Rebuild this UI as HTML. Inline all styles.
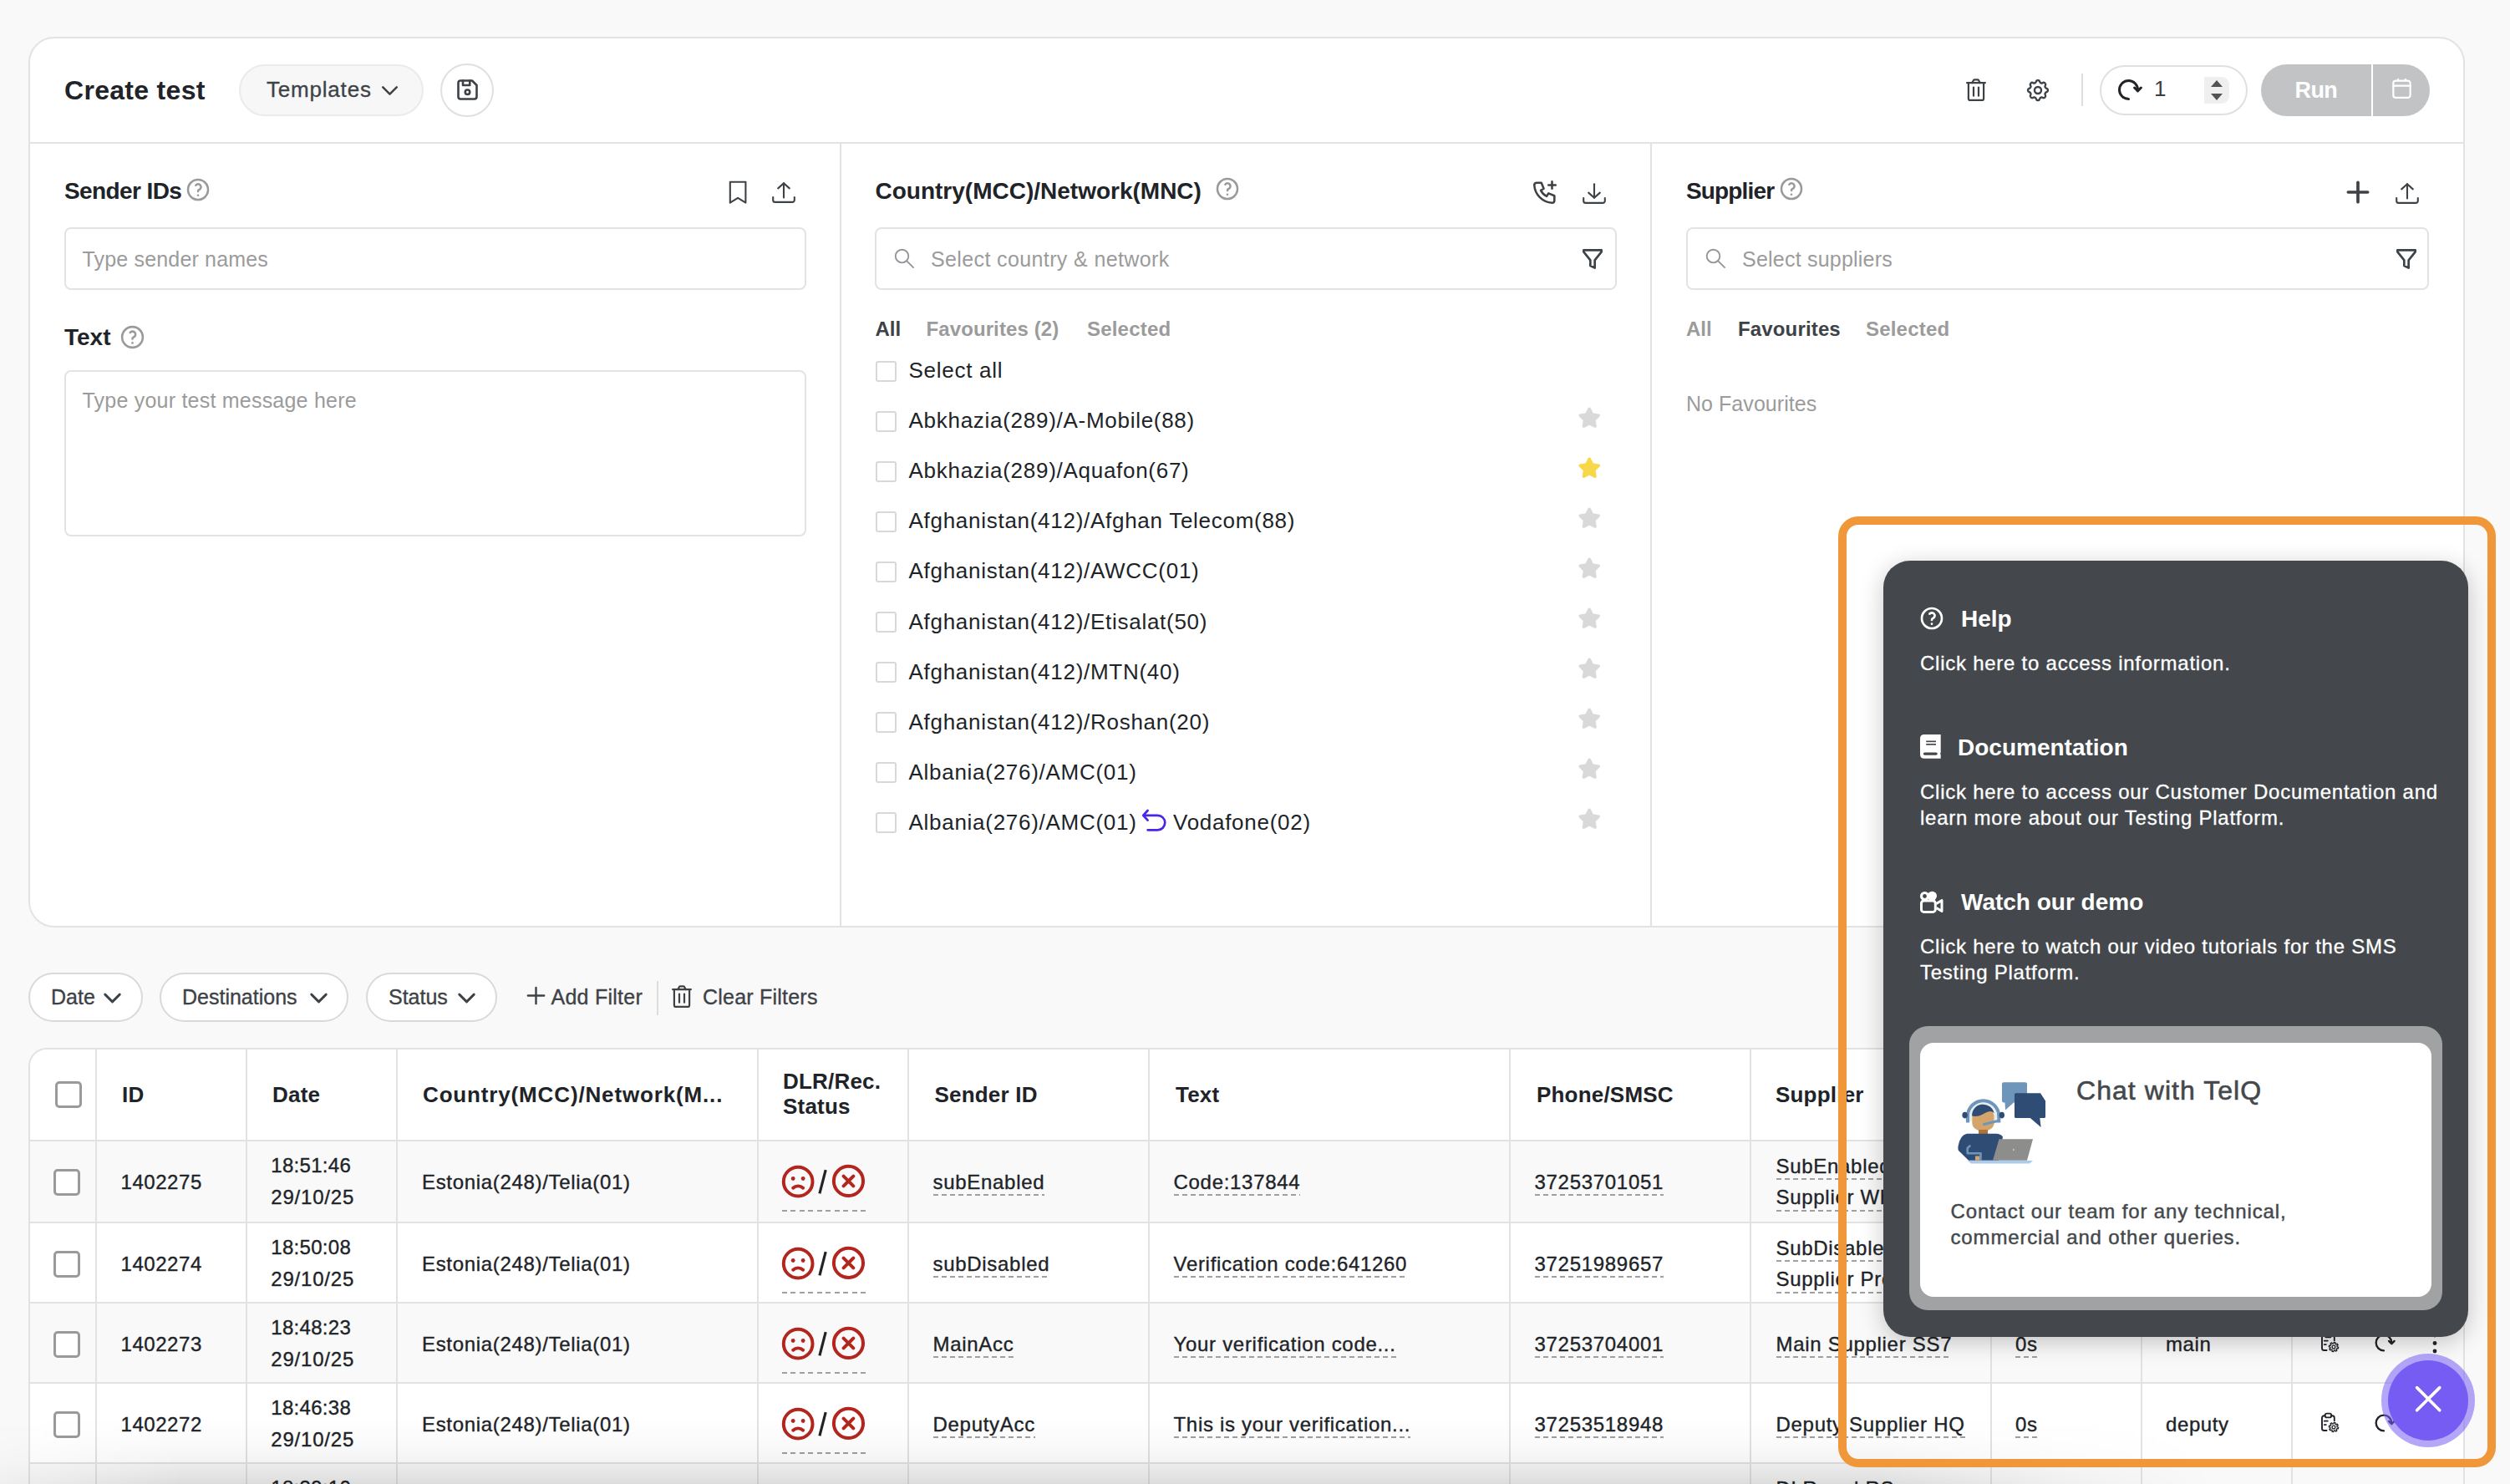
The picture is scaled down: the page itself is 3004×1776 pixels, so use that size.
<!DOCTYPE html><html><head><meta charset="utf-8"><style>
html,body{margin:0;padding:0;width:3004px;height:1776px;overflow:hidden;background:#f9f9f9;font-family:"Liberation Sans",sans-serif;}
.a{position:absolute;box-sizing:border-box;}
.t{position:absolute;white-space:nowrap;line-height:1.15;}
.u::after{content:'';position:absolute;left:0;right:0;bottom:-2.7px;height:2px;background:repeating-linear-gradient(90deg,#a0a0a0 0 6px,transparent 6px 10px);}
</style></head><body>
<div class="a" style="left:34px;top:44px;width:2916px;height:1066px;background:#fff;border:2px solid #e3e3e3;border-radius:31px;"></div>
<div class="a" style="left:36px;top:170px;width:2912px;height:2px;background:#e3e3e3;"></div>
<div class="a" style="left:1005px;top:172px;width:2px;height:936px;background:#e3e3e3;"></div>
<div class="a" style="left:1975px;top:172px;width:2px;height:936px;background:#e3e3e3;"></div>
<div class="t" style="left:77px;top:89.5px;font-size:32px;font-weight:700;color:#202327;letter-spacing:0.3px;">Create test</div>
<div class="a" style="left:286px;top:77px;width:221px;height:62px;background:#f7f7f7;border:2px solid #ebebeb;border-radius:31px;"></div>
<div class="t" style="left:319px;top:92.5px;font-size:26px;font-weight:400;color:#3d4247;-webkit-text-stroke:0.3px #3d4247;letter-spacing:0.8px;">Templates</div>
<svg class="a" style="left:449.8px;top:91.7px;width:33.0px;height:33.0px;color:#3d4247;" viewBox="0 0 24 24" fill="none" stroke="#3d4247" stroke-width="1.85" stroke-linecap="round" stroke-linejoin="round"><path d="M6 9l6 6l6 -6"/></svg>
<div class="a" style="left:527px;top:76px;width:64px;height:64px;border:2px solid #e0e0e0;border-radius:50%;"></div>
<svg class="a" style="left:543px;top:91px;width:33px;height:33px;color:#3d4247;" viewBox="0 0 24 24" fill="none" stroke="#3d4247" stroke-width="1.9" stroke-linecap="round" stroke-linejoin="round"><path d="M6 4h10l4 4v10a2 2 0 0 1 -2 2h-12a2 2 0 0 1 -2 -2v-12a2 2 0 0 1 2 -2"/><path d="M10 14a2 2 0 1 0 4 0a2 2 0 1 0 -4 0"/><path d="M14 4l0 4l-6 0l0 -4"/></svg>
<svg class="a" style="left:2350px;top:90px;width:30px;height:35px;color:#3d4247;" viewBox="0 0 30 35" fill="none" stroke="#3d4247" stroke-width="2.2" stroke-linecap="round" stroke-linejoin="round"><path d="M4.1 9.1H25.9"/><path d="M5.9 9.1V27.9a2 2 0 0 0 2 2H22.1a2 2 0 0 0 2 -2V9.1"/><path d="M12 14.5V24.7"/><path d="M18 14.5V24.7"/><path d="M10.2 9.1L11.9 6.2Q12.4 5.4 13.3 5.4H16.7Q17.6 5.4 18.1 6.2L19.8 9.1"/></svg>
<svg class="a" style="left:2422px;top:92px;width:34px;height:32px;color:#3d4247;" viewBox="0 0 24 24" fill="none" stroke="#3d4247" stroke-width="1.8" stroke-linecap="round" stroke-linejoin="round"><path d="M10.325 4.317c.426 -1.756 2.924 -1.756 3.35 0a1.724 1.724 0 0 0 2.573 1.066c1.543 -.94 3.31 .826 2.37 2.37a1.724 1.724 0 0 0 1.065 2.572c1.756 .426 1.756 2.924 0 3.35a1.724 1.724 0 0 0 -1.066 2.573c.94 1.543 -.826 3.31 -2.37 2.37a1.724 1.724 0 0 0 -2.572 1.065c-.426 1.756 -2.924 1.756 -3.35 0a1.724 1.724 0 0 0 -2.573 -1.066c-1.543 .94 -3.31 -.826 -2.37 -2.37a1.724 1.724 0 0 0 -1.065 -2.572c-1.756 -.426 -1.756 -2.924 0 -3.35a1.724 1.724 0 0 0 1.066 -2.573c-.94 -1.543 .826 -3.31 2.37 -2.37c1 .608 2.296 .07 2.572 -1.065z"/><path d="M9 12a3 3 0 1 0 6 0a3 3 0 0 0 -6 0"/></svg>
<div class="a" style="left:2491px;top:88px;width:2px;height:39px;background:#dddddd;"></div>
<div class="a" style="left:2513px;top:78px;width:177px;height:60px;border:2px solid #e0e0e0;border-radius:30px;"></div>
<svg class="a" style="left:2531px;top:91px;width:33px;height:33px;color:#202327;" viewBox="0 0 24 24" fill="none" stroke="#202327" stroke-width="2.2" stroke-linecap="round" stroke-linejoin="round"><path d="M12 20A8 8 0 1 1 20 12"/><path d="M17.2 10.2L20 13L22.8 10.2"/></svg>
<div class="t" style="left:2578px;top:92.0px;font-size:26px;font-weight:400;color:#3a3f44;">1</div>
<div class="a" style="left:2638px;top:92px;width:30px;height:32px;background:#efefef;border-radius:0 9px 9px 0;"></div>
<svg class="a" style="left:2646px;top:96px;width:14px;height:24px" viewBox="0 0 14 24"><path d="M7 0L14 8H0z M0 16H14L7 24z" fill="#505356"/></svg>
<div class="a" style="left:2706px;top:77px;width:132px;height:62px;background:#c2c3c5;border-radius:31px 0 0 31px;"></div>
<div class="a" style="left:2840px;top:77px;width:68px;height:62px;background:#c2c3c5;border-radius:0 31px 31px 0;"></div>
<div class="t" style="left:2746.5px;top:92.6px;font-size:27px;font-weight:700;color:#ffffff;letter-spacing:-0.6px;">Run</div>
<svg class="a" style="left:2860px;top:91px;width:29px;height:29px;color:#ffffff;" viewBox="0 0 24 24" fill="none" stroke="#ffffff" stroke-width="1.8" stroke-linecap="round" stroke-linejoin="round"><path d="M3.6 7a2.4 2.4 0 0 1 2.4 -2.4h12a2.4 2.4 0 0 1 2.4 2.4v12a2.4 2.4 0 0 1 -2.4 2.4h-12a2.4 2.4 0 0 1 -2.4 -2.4v-12z"/><path d="M15.6 3.2v1.4"/><path d="M8.4 3.2v1.4"/><path d="M3.6 9.6h16.8"/></svg>
<div class="t" style="left:77px;top:212.7px;font-size:28px;font-weight:700;color:#202327;letter-spacing:-0.6px;">Sender IDs</div>
<svg class="a" style="left:221px;top:211px;width:32px;height:32px;color:#9a9a9a;" viewBox="0 0 24 24" fill="none" stroke="#9a9a9a" stroke-width="1.9" stroke-linecap="round" stroke-linejoin="round"><path d="M3 12a9 9 0 1 0 18 0a9 9 0 1 0 -18 0"/><path d="M12 17l0 .01"/><path d="M12 13.5a1.5 1.5 0 0 1 1 -1.5a2.6 2.6 0 1 0 -3 -4"/></svg>
<svg class="a" style="left:860px;top:205px;width:110px;height:50px" viewBox="0 0 110 50" fill="none" stroke="#3d4247" stroke-width="2.1" stroke-linecap="round" stroke-linejoin="round"><path d="M13.8 12.7H32.4V37.6L23.1 31.9L13.8 37.6Z"/></svg>
<svg class="a" style="left:860px;top:205px;width:110px;height:50px" viewBox="0 0 110 50" fill="none" stroke="#3d4247" stroke-width="2.1" stroke-linecap="round" stroke-linejoin="round"><path d="M78 14.4V31.5"/><path d="M71.2 20.4L78 14.2L84.8 20.4"/><path d="M65.2 31V34.4a2.5 2.5 0 0 0 2.5 2.5H88.3a2.5 2.5 0 0 0 2.5 -2.5V31"/></svg>
<div class="a" style="left:77px;top:272px;width:888px;height:75px;border:2px solid #e1e3e6;border-radius:8px;"></div>
<div class="t" style="left:98.5px;top:296.0px;font-size:25px;font-weight:400;color:#9b9b9b;letter-spacing:0.17px;">Type sender names</div>
<div class="t" style="left:77px;top:388.4px;font-size:28px;font-weight:700;color:#202327;">Text</div>
<svg class="a" style="left:142px;top:387px;width:33px;height:33px;color:#9a9a9a;" viewBox="0 0 24 24" fill="none" stroke="#9a9a9a" stroke-width="1.9" stroke-linecap="round" stroke-linejoin="round"><path d="M3 12a9 9 0 1 0 18 0a9 9 0 1 0 -18 0"/><path d="M12 17l0 .01"/><path d="M12 13.5a1.5 1.5 0 0 1 1 -1.5a2.6 2.6 0 1 0 -3 -4"/></svg>
<div class="a" style="left:77px;top:443px;width:888px;height:199px;border:2px solid #e1e3e6;border-radius:8px;"></div>
<div class="t" style="left:98.5px;top:465.4px;font-size:25px;font-weight:400;color:#9b9b9b;letter-spacing:0.22px;">Type your test message here</div>
<div class="t" style="left:1047.5px;top:212.7px;font-size:28px;font-weight:700;color:#202327;">Country(MCC)/Network(MNC)</div>
<svg class="a" style="left:1453px;top:210px;width:32px;height:32px;color:#9a9a9a;" viewBox="0 0 24 24" fill="none" stroke="#9a9a9a" stroke-width="1.9" stroke-linecap="round" stroke-linejoin="round"><path d="M3 12a9 9 0 1 0 18 0a9 9 0 1 0 -18 0"/><path d="M12 17l0 .01"/><path d="M12 13.5a1.5 1.5 0 0 1 1 -1.5a2.6 2.6 0 1 0 -3 -4"/></svg>
<svg class="a" style="left:1832px;top:212px;width:34px;height:36px;color:#3d4247;" viewBox="0 0 24 24" fill="none" stroke="#3d4247" stroke-width="1.8" stroke-linecap="round" stroke-linejoin="round"><path d="M5 4h4l2 5l-2.5 1.5a11 11 0 0 0 5 5l1.5 -2.5l5 2v4a2 2 0 0 1 -2 2a16 16 0 0 1 -15 -15a2 2 0 0 1 2 -2"/><path d="M15 6h6m-3 -3v6"/></svg>
<svg class="a" style="left:1829.8px;top:205.5px;width:110px;height:50px" viewBox="0 0 110 50" fill="none" stroke="#3d4247" stroke-width="2.1" stroke-linecap="round" stroke-linejoin="round"><path d="M78 14.2V30.5"/><path d="M71.2 24.6L78 30.8L84.8 24.6"/><path d="M65.2 31V34.4a2.5 2.5 0 0 0 2.5 2.5H88.3a2.5 2.5 0 0 0 2.5 -2.5V31"/></svg>
<div class="a" style="left:1047px;top:272px;width:888px;height:75px;border:2px solid #e1e3e6;border-radius:8px;"></div>
<svg class="a" style="left:1055px;top:285px;width:50px;height:50px" viewBox="0 0 50 50" fill="none" stroke="#939598" stroke-width="1.85" stroke-linecap="round"><circle cx="24.5" cy="21.5" r="7.8"/><path d="M30.2 27.3L38.1 35.1"/></svg>
<div class="t" style="left:1114px;top:296.0px;font-size:25px;font-weight:400;color:#9b9b9b;letter-spacing:0.38px;">Select country &amp; network</div>
<svg class="a" style="left:1889px;top:294px;width:34px;height:32px;color:#3d4247;" viewBox="0 0 24 24" fill="none" stroke="#3d4247" stroke-width="2" stroke-linecap="round" stroke-linejoin="round"><path d="M4 4h16v1.5l-6 7.5v7l-4 -2v-5l-6 -7.5z"/></svg>
<div class="t" style="left:1047.5px;top:379.9px;font-size:24px;font-weight:700;color:#3d4247;">All</div>
<div class="t" style="left:1108.5px;top:379.9px;font-size:24px;font-weight:700;color:#9b9b9b;letter-spacing:0.1px;">Favourites (2)</div>
<div class="t" style="left:1301px;top:379.9px;font-size:24px;font-weight:700;color:#9b9b9b;letter-spacing:0.2px;">Selected</div>
<div class="a" style="left:1047.5px;top:431.5px;width:25.0px;height:25.0px;border:2px solid #d8d8d8;border-radius:3px;"></div>
<div class="t" style="left:1087.5px;top:429.2px;font-size:26px;font-weight:400;color:#202327;letter-spacing:0.72px;">Select all</div>
<div class="a" style="left:1047.5px;top:491.55px;width:25.0px;height:24.999999999999943px;border:2px solid #d8d8d8;border-radius:3px;"></div>
<div class="t" style="left:1087.5px;top:489.3px;font-size:26px;font-weight:400;color:#202327;letter-spacing:0.72px;">Abkhazia(289)/A-Mobile(88)</div>
<svg class="a" style="left:1889.3px;top:486.85px;width:26.4px;height:26.4px" viewBox="0 0 24 24"><path d="M8.243 7.34l-6.38 .925l-.113 .023a1 1 0 0 0 -.44 1.684l4.622 4.499l-1.09 6.355l-.013 .11a1 1 0 0 0 1.464 .944l5.706 -3l5.693 3l.1 .046a1 1 0 0 0 1.352 -1.1l-1.091 -6.355l4.624 -4.5l.078 -.085a1 1 0 0 0 -.633 -1.62l-6.38 -.926l-2.852 -5.78a1 1 0 0 0 -1.794 0l-2.853 5.78z" fill="#d9d9d9" stroke="#d9d9d9" stroke-width="1.3" stroke-linejoin="round"/></svg>
<div class="a" style="left:1047.5px;top:551.6px;width:25.0px;height:25.0px;border:2px solid #d8d8d8;border-radius:3px;"></div>
<div class="t" style="left:1087.5px;top:549.3px;font-size:26px;font-weight:400;color:#202327;letter-spacing:0.72px;">Abkhazia(289)/Aquafon(67)</div>
<svg class="a" style="left:1889.3px;top:546.90px;width:26.4px;height:26.4px" viewBox="0 0 24 24"><path d="M8.243 7.34l-6.38 .925l-.113 .023a1 1 0 0 0 -.44 1.684l4.622 4.499l-1.09 6.355l-.013 .11a1 1 0 0 0 1.464 .944l5.706 -3l5.693 3l.1 .046a1 1 0 0 0 1.352 -1.1l-1.091 -6.355l4.624 -4.5l.078 -.085a1 1 0 0 0 -.633 -1.62l-6.38 -.926l-2.852 -5.78a1 1 0 0 0 -1.794 0l-2.853 5.78z" fill="#f7d84a" stroke="#f7d84a" stroke-width="1.3" stroke-linejoin="round"/></svg>
<div class="a" style="left:1047.5px;top:611.65px;width:25.0px;height:25.0px;border:2px solid #d8d8d8;border-radius:3px;"></div>
<div class="t" style="left:1087.5px;top:609.4px;font-size:26px;font-weight:400;color:#202327;letter-spacing:0.72px;">Afghanistan(412)/Afghan Telecom(88)</div>
<svg class="a" style="left:1889.3px;top:606.95px;width:26.4px;height:26.4px" viewBox="0 0 24 24"><path d="M8.243 7.34l-6.38 .925l-.113 .023a1 1 0 0 0 -.44 1.684l4.622 4.499l-1.09 6.355l-.013 .11a1 1 0 0 0 1.464 .944l5.706 -3l5.693 3l.1 .046a1 1 0 0 0 1.352 -1.1l-1.091 -6.355l4.624 -4.5l.078 -.085a1 1 0 0 0 -.633 -1.62l-6.38 -.926l-2.852 -5.78a1 1 0 0 0 -1.794 0l-2.853 5.78z" fill="#d9d9d9" stroke="#d9d9d9" stroke-width="1.3" stroke-linejoin="round"/></svg>
<div class="a" style="left:1047.5px;top:671.7px;width:25.0px;height:25.0px;border:2px solid #d8d8d8;border-radius:3px;"></div>
<div class="t" style="left:1087.5px;top:669.4px;font-size:26px;font-weight:400;color:#202327;letter-spacing:0.72px;">Afghanistan(412)/AWCC(01)</div>
<svg class="a" style="left:1889.3px;top:667.00px;width:26.4px;height:26.4px" viewBox="0 0 24 24"><path d="M8.243 7.34l-6.38 .925l-.113 .023a1 1 0 0 0 -.44 1.684l4.622 4.499l-1.09 6.355l-.013 .11a1 1 0 0 0 1.464 .944l5.706 -3l5.693 3l.1 .046a1 1 0 0 0 1.352 -1.1l-1.091 -6.355l4.624 -4.5l.078 -.085a1 1 0 0 0 -.633 -1.62l-6.38 -.926l-2.852 -5.78a1 1 0 0 0 -1.794 0l-2.853 5.78z" fill="#d9d9d9" stroke="#d9d9d9" stroke-width="1.3" stroke-linejoin="round"/></svg>
<div class="a" style="left:1047.5px;top:731.75px;width:25.0px;height:25.0px;border:2px solid #d8d8d8;border-radius:3px;"></div>
<div class="t" style="left:1087.5px;top:729.5px;font-size:26px;font-weight:400;color:#202327;letter-spacing:0.72px;">Afghanistan(412)/Etisalat(50)</div>
<svg class="a" style="left:1889.3px;top:727.05px;width:26.4px;height:26.4px" viewBox="0 0 24 24"><path d="M8.243 7.34l-6.38 .925l-.113 .023a1 1 0 0 0 -.44 1.684l4.622 4.499l-1.09 6.355l-.013 .11a1 1 0 0 0 1.464 .944l5.706 -3l5.693 3l.1 .046a1 1 0 0 0 1.352 -1.1l-1.091 -6.355l4.624 -4.5l.078 -.085a1 1 0 0 0 -.633 -1.62l-6.38 -.926l-2.852 -5.78a1 1 0 0 0 -1.794 0l-2.853 5.78z" fill="#d9d9d9" stroke="#d9d9d9" stroke-width="1.3" stroke-linejoin="round"/></svg>
<div class="a" style="left:1047.5px;top:791.8px;width:25.0px;height:25.0px;border:2px solid #d8d8d8;border-radius:3px;"></div>
<div class="t" style="left:1087.5px;top:789.5px;font-size:26px;font-weight:400;color:#202327;letter-spacing:0.72px;">Afghanistan(412)/MTN(40)</div>
<svg class="a" style="left:1889.3px;top:787.10px;width:26.4px;height:26.4px" viewBox="0 0 24 24"><path d="M8.243 7.34l-6.38 .925l-.113 .023a1 1 0 0 0 -.44 1.684l4.622 4.499l-1.09 6.355l-.013 .11a1 1 0 0 0 1.464 .944l5.706 -3l5.693 3l.1 .046a1 1 0 0 0 1.352 -1.1l-1.091 -6.355l4.624 -4.5l.078 -.085a1 1 0 0 0 -.633 -1.62l-6.38 -.926l-2.852 -5.78a1 1 0 0 0 -1.794 0l-2.853 5.78z" fill="#d9d9d9" stroke="#d9d9d9" stroke-width="1.3" stroke-linejoin="round"/></svg>
<div class="a" style="left:1047.5px;top:851.8499999999999px;width:25.0px;height:25.0px;border:2px solid #d8d8d8;border-radius:3px;"></div>
<div class="t" style="left:1087.5px;top:849.6px;font-size:26px;font-weight:400;color:#202327;letter-spacing:0.72px;">Afghanistan(412)/Roshan(20)</div>
<svg class="a" style="left:1889.3px;top:847.15px;width:26.4px;height:26.4px" viewBox="0 0 24 24"><path d="M8.243 7.34l-6.38 .925l-.113 .023a1 1 0 0 0 -.44 1.684l4.622 4.499l-1.09 6.355l-.013 .11a1 1 0 0 0 1.464 .944l5.706 -3l5.693 3l.1 .046a1 1 0 0 0 1.352 -1.1l-1.091 -6.355l4.624 -4.5l.078 -.085a1 1 0 0 0 -.633 -1.62l-6.38 -.926l-2.852 -5.78a1 1 0 0 0 -1.794 0l-2.853 5.78z" fill="#d9d9d9" stroke="#d9d9d9" stroke-width="1.3" stroke-linejoin="round"/></svg>
<div class="a" style="left:1047.5px;top:911.9px;width:25.0px;height:25.0px;border:2px solid #d8d8d8;border-radius:3px;"></div>
<div class="t" style="left:1087.5px;top:909.6px;font-size:26px;font-weight:400;color:#202327;letter-spacing:0.72px;">Albania(276)/AMC(01)</div>
<svg class="a" style="left:1889.3px;top:907.20px;width:26.4px;height:26.4px" viewBox="0 0 24 24"><path d="M8.243 7.34l-6.38 .925l-.113 .023a1 1 0 0 0 -.44 1.684l4.622 4.499l-1.09 6.355l-.013 .11a1 1 0 0 0 1.464 .944l5.706 -3l5.693 3l.1 .046a1 1 0 0 0 1.352 -1.1l-1.091 -6.355l4.624 -4.5l.078 -.085a1 1 0 0 0 -.633 -1.62l-6.38 -.926l-2.852 -5.78a1 1 0 0 0 -1.794 0l-2.853 5.78z" fill="#d9d9d9" stroke="#d9d9d9" stroke-width="1.3" stroke-linejoin="round"/></svg>
<div class="a" style="left:1047.5px;top:971.9499999999999px;width:25.0px;height:25.0px;border:2px solid #d8d8d8;border-radius:3px;"></div>
<div class="t" style="left:1087.5px;top:969.7px;font-size:26px;font-weight:400;color:#202327;letter-spacing:0.72px;">Albania(276)/AMC(01)</div>
<svg class="a" style="left:1889.3px;top:967.25px;width:26.4px;height:26.4px" viewBox="0 0 24 24"><path d="M8.243 7.34l-6.38 .925l-.113 .023a1 1 0 0 0 -.44 1.684l4.622 4.499l-1.09 6.355l-.013 .11a1 1 0 0 0 1.464 .944l5.706 -3l5.693 3l.1 .046a1 1 0 0 0 1.352 -1.1l-1.091 -6.355l4.624 -4.5l.078 -.085a1 1 0 0 0 -.633 -1.62l-6.38 -.926l-2.852 -5.78a1 1 0 0 0 -1.794 0l-2.853 5.78z" fill="#d9d9d9" stroke="#d9d9d9" stroke-width="1.3" stroke-linejoin="round"/></svg>
<svg class="a" style="left:1355px;top:960px;width:55px;height:40px" viewBox="0 0 55 40" fill="none" stroke="#4a24ea" stroke-width="2.7" stroke-linecap="round" stroke-linejoin="round"><path d="M18.6 10L13.2 15.8L18.6 21.6M13.2 15.8H30.5A8.75 8.75 0 0 1 30.5 33.3H18.6"/></svg>
<div class="t" style="left:1404px;top:969.7px;font-size:26px;font-weight:400;color:#202327;letter-spacing:0.72px;">Vodafone(02)</div>
<div class="t" style="left:2018px;top:212.7px;font-size:28px;font-weight:700;color:#202327;letter-spacing:-0.85px;">Supplier</div>
<svg class="a" style="left:2128px;top:210px;width:32px;height:32px;color:#9a9a9a;" viewBox="0 0 24 24" fill="none" stroke="#9a9a9a" stroke-width="1.9" stroke-linecap="round" stroke-linejoin="round"><path d="M3 12a9 9 0 1 0 18 0a9 9 0 1 0 -18 0"/><path d="M12 17l0 .01"/><path d="M12 13.5a1.5 1.5 0 0 1 1 -1.5a2.6 2.6 0 1 0 -3 -4"/></svg>
<svg class="a" style="left:2802px;top:210px;width:40px;height:40px;color:#3d4247;" viewBox="0 0 24 24" fill="none" stroke="#3d4247" stroke-width="2.2" stroke-linecap="round" stroke-linejoin="round"><path d="M12 5l0 14"/><path d="M5 12l14 0"/></svg>
<svg class="a" style="left:2802.8px;top:206px;width:110px;height:50px" viewBox="0 0 110 50" fill="none" stroke="#3d4247" stroke-width="2.1" stroke-linecap="round" stroke-linejoin="round"><path d="M78 14.4V31.5"/><path d="M71.2 20.4L78 14.2L84.8 20.4"/><path d="M65.2 31V34.4a2.5 2.5 0 0 0 2.5 2.5H88.3a2.5 2.5 0 0 0 2.5 -2.5V31"/></svg>
<div class="a" style="left:2018px;top:272px;width:889px;height:75px;border:2px solid #e1e3e6;border-radius:8px;"></div>
<svg class="a" style="left:2025.5px;top:285px;width:50px;height:50px" viewBox="0 0 50 50" fill="none" stroke="#939598" stroke-width="1.85" stroke-linecap="round"><circle cx="24.5" cy="21.5" r="7.8"/><path d="M30.2 27.3L38.1 35.1"/></svg>
<div class="t" style="left:2085px;top:296.0px;font-size:25px;font-weight:400;color:#9b9b9b;letter-spacing:0.22px;">Select suppliers</div>
<svg class="a" style="left:2863px;top:294px;width:34px;height:32px;color:#3d4247;" viewBox="0 0 24 24" fill="none" stroke="#3d4247" stroke-width="2" stroke-linecap="round" stroke-linejoin="round"><path d="M4 4h16v1.5l-6 7.5v7l-4 -2v-5l-6 -7.5z"/></svg>
<div class="t" style="left:2018px;top:379.9px;font-size:24px;font-weight:700;color:#9b9b9b;">All</div>
<div class="t" style="left:2080px;top:379.9px;font-size:24px;font-weight:700;color:#3d4247;letter-spacing:0.15px;">Favourites</div>
<div class="t" style="left:2233px;top:379.9px;font-size:24px;font-weight:700;color:#9b9b9b;letter-spacing:0.2px;">Selected</div>
<div class="t" style="left:2018px;top:468.5px;font-size:25px;font-weight:400;color:#9b9b9b;letter-spacing:0.05px;">No Favourites</div>
<div class="a" style="left:34px;top:1164px;width:137px;height:59px;background:#fff;border:2px solid #d9d9d9;border-radius:30px;"></div>
<div class="t" style="left:61px;top:1179.0px;font-size:25px;font-weight:400;color:#3d4247;-webkit-text-stroke:0.35px #3d4247;">Date</div>
<svg class="a" style="left:116.5px;top:1177px;width:35.0px;height:35px;color:#3d4247;" viewBox="0 0 24 24" fill="none" stroke="#3d4247" stroke-width="1.95" stroke-linecap="round" stroke-linejoin="round"><path d="M6 9l6 6l6 -6"/></svg>
<div class="a" style="left:191px;top:1164px;width:226px;height:59px;background:#fff;border:2px solid #d9d9d9;border-radius:30px;"></div>
<div class="t" style="left:218px;top:1179.0px;font-size:25px;font-weight:400;color:#3d4247;-webkit-text-stroke:0.35px #3d4247;">Destinations</div>
<svg class="a" style="left:363.5px;top:1177px;width:35.0px;height:35px;color:#3d4247;" viewBox="0 0 24 24" fill="none" stroke="#3d4247" stroke-width="1.95" stroke-linecap="round" stroke-linejoin="round"><path d="M6 9l6 6l6 -6"/></svg>
<div class="a" style="left:438px;top:1164px;width:157px;height:59px;background:#fff;border:2px solid #d9d9d9;border-radius:30px;"></div>
<div class="t" style="left:465px;top:1179.0px;font-size:25px;font-weight:400;color:#3d4247;-webkit-text-stroke:0.35px #3d4247;">Status</div>
<svg class="a" style="left:540.5px;top:1177px;width:35.0px;height:35px;color:#3d4247;" viewBox="0 0 24 24" fill="none" stroke="#3d4247" stroke-width="1.95" stroke-linecap="round" stroke-linejoin="round"><path d="M6 9l6 6l6 -6"/></svg>
<svg class="a" style="left:625px;top:1175px;width:33px;height:33px;color:#3d4247;" viewBox="0 0 24 24" fill="none" stroke="#3d4247" stroke-width="1.75" stroke-linecap="round" stroke-linejoin="round"><path d="M12 5l0 14"/><path d="M5 12l14 0"/></svg>
<div class="t" style="left:659.5px;top:1179.0px;font-size:25px;font-weight:400;color:#3d4247;-webkit-text-stroke:0.35px #3d4247;letter-spacing:0.25px;">Add Filter</div>
<div class="a" style="left:786px;top:1174px;width:2px;height:41px;background:#dddddd;"></div>
<svg class="a" style="left:801px;top:1175.4px;width:30px;height:35.0px;color:#3d4247;" viewBox="0 0 30 35" fill="none" stroke="#3d4247" stroke-width="2.2" stroke-linecap="round" stroke-linejoin="round"><path d="M4.1 9.1H25.9"/><path d="M5.9 9.1V27.9a2 2 0 0 0 2 2H22.1a2 2 0 0 0 2 -2V9.1"/><path d="M12 14.5V24.7"/><path d="M18 14.5V24.7"/><path d="M10.2 9.1L11.9 6.2Q12.4 5.4 13.3 5.4H16.7Q17.6 5.4 18.1 6.2L19.8 9.1"/></svg>
<div class="t" style="left:841px;top:1179.0px;font-size:25px;font-weight:400;color:#3d4247;-webkit-text-stroke:0.35px #3d4247;letter-spacing:0.22px;">Clear Filters</div>
<div class="a" style="left:34px;top:1254px;width:2916px;height:646px;background:#fff;border:2px solid #e2e2e2;border-radius:22px 22px 0 0;"></div>
<div class="a" style="left:36px;top:1366px;width:2912px;height:96px;background:#f9f9f9;"></div>
<div class="a" style="left:36px;top:1464px;width:2912px;height:94px;background:#ffffff;"></div>
<div class="a" style="left:36px;top:1560px;width:2912px;height:94px;background:#f9f9f9;"></div>
<div class="a" style="left:36px;top:1656px;width:2912px;height:94px;background:#ffffff;"></div>
<div class="a" style="left:36px;top:1752px;width:2912px;height:24px;background:#f9f9f9;"></div>
<div class="a" style="left:36px;top:1364px;width:2912px;height:2px;background:#e2e2e2;"></div>
<div class="a" style="left:36px;top:1462px;width:2912px;height:2px;background:#e2e2e2;"></div>
<div class="a" style="left:36px;top:1558px;width:2912px;height:2px;background:#e2e2e2;"></div>
<div class="a" style="left:36px;top:1654px;width:2912px;height:2px;background:#e2e2e2;"></div>
<div class="a" style="left:36px;top:1750px;width:2912px;height:2px;background:#e2e2e2;"></div>
<div class="a" style="left:114px;top:1256px;width:2px;height:520px;background:#e2e2e2;"></div>
<div class="a" style="left:294px;top:1256px;width:2px;height:520px;background:#e2e2e2;"></div>
<div class="a" style="left:474px;top:1256px;width:2px;height:520px;background:#e2e2e2;"></div>
<div class="a" style="left:906px;top:1256px;width:2px;height:520px;background:#e2e2e2;"></div>
<div class="a" style="left:1086px;top:1256px;width:2px;height:520px;background:#e2e2e2;"></div>
<div class="a" style="left:1374px;top:1256px;width:2px;height:520px;background:#e2e2e2;"></div>
<div class="a" style="left:1806px;top:1256px;width:2px;height:520px;background:#e2e2e2;"></div>
<div class="a" style="left:2094px;top:1256px;width:2px;height:520px;background:#e2e2e2;"></div>
<div class="a" style="left:2382px;top:1256px;width:2px;height:520px;background:#e2e2e2;"></div>
<div class="a" style="left:2562px;top:1256px;width:2px;height:520px;background:#e2e2e2;"></div>
<div class="a" style="left:2742px;top:1256px;width:2px;height:520px;background:#e2e2e2;"></div>
<div class="a" style="left:66px;top:1294px;width:32px;height:32px;background:#fff;border:3px solid #9a9a9a;border-radius:5px;"></div>
<div class="t" style="left:146px;top:1295.5px;font-size:26px;font-weight:700;color:#202327;letter-spacing:0.2px;">ID</div>
<div class="t" style="left:326px;top:1295.5px;font-size:26px;font-weight:700;color:#202327;letter-spacing:0.2px;">Date</div>
<div class="t" style="left:506px;top:1295.5px;font-size:26px;font-weight:700;color:#202327;letter-spacing:0.85px;">Country(MCC)/Network(M...</div>
<div class="t" style="left:1118.5px;top:1295.5px;font-size:26px;font-weight:700;color:#202327;letter-spacing:0.2px;">Sender ID</div>
<div class="t" style="left:1407px;top:1295.5px;font-size:26px;font-weight:700;color:#202327;letter-spacing:0.2px;">Text</div>
<div class="t" style="left:1839px;top:1295.5px;font-size:26px;font-weight:700;color:#202327;letter-spacing:0.2px;">Phone/SMSC</div>
<div class="t" style="left:2125px;top:1295.5px;font-size:26px;font-weight:700;color:#202327;letter-spacing:0.2px;">Supplier</div>
<div class="t" style="left:937px;top:1279.5px;font-size:26px;font-weight:700;color:#202327;letter-spacing:0.2px;">DLR/Rec.</div>
<div class="t" style="left:937px;top:1310.0px;font-size:26px;font-weight:700;color:#202327;letter-spacing:0.2px;">Status</div>
<div class="a" style="left:64px;top:1399px;width:32px;height:32px;background:#fff;border:3px solid #9a9a9a;border-radius:5px;"></div>
<div class="t" style="left:144.5px;top:1401.1px;font-size:24px;font-weight:400;color:#202327;-webkit-text-stroke:0.35px #202327;letter-spacing:0.55px;">1402275</div>
<div class="t" style="left:324.3px;top:1381.4px;font-size:24px;font-weight:400;color:#202327;-webkit-text-stroke:0.35px #202327;letter-spacing:0.3px;">18:51:46</div>
<div class="t" style="left:324.3px;top:1418.9px;font-size:24px;font-weight:400;color:#202327;-webkit-text-stroke:0.35px #202327;letter-spacing:0.8px;">29/10/25</div>
<div class="t" style="left:505px;top:1401.1px;font-size:24px;font-weight:400;color:#202327;-webkit-text-stroke:0.35px #202327;letter-spacing:0.68px;">Estonia(248)/Telia(01)</div>
<svg class="a" style="left:932.2px;top:1390.7px;width:46.299999999999955px;height:46.299999999999955px;color:#b3261e;" viewBox="0 0 24 24" fill="none" stroke="#b3261e" stroke-width="2.05" stroke-linecap="round" stroke-linejoin="round"><path d="M3 12a9 9 0 1 0 18 0a9 9 0 1 0 -18 0"/><circle cx="8.9" cy="10.1" r="1.25" fill="currentColor" stroke="none"/><circle cx="15.1" cy="10.1" r="1.25" fill="currentColor" stroke="none"/><path d="M8.9 15.9a4.6 4.6 0 0 1 6.2 0"/></svg>
<svg class="a" style="left:991.7px;top:1390px;width:46.899999999999864px;height:46.90000000000009px;color:#b3261e;" viewBox="0 0 24 24" fill="none" stroke="#b3261e" stroke-width="2.05" stroke-linecap="round" stroke-linejoin="round"><path d="M3 12a9 9 0 1 0 18 0a9 9 0 1 0 -18 0"/><path d="M9 9l6 6m0 -6l-6 6"/></svg>
<svg class="a" style="left:975px;top:1398px;width:20px;height:34px" viewBox="0 0 20 34"><path d="M5.9 30.4L13.2 2.2" stroke="#202327" stroke-width="3.2"/></svg>
<div class="a" style="left:936px;top:1448px;width:100px;height:2px;background:repeating-linear-gradient(90deg,#a0a0a0 0 6px,transparent 6px 10.45px);"></div>
<div class="t u" style="left:1116.5px;top:1401.1px;font-size:24px;color:#202327;letter-spacing:0.7px;-webkit-text-stroke:0.35px #202327;">subEnabled</div>
<div class="t u" style="left:1404.5px;top:1401.1px;font-size:24px;color:#202327;letter-spacing:0.7px;-webkit-text-stroke:0.35px #202327;">Code:137844</div>
<div class="t u" style="left:1836.5px;top:1401.1px;font-size:24px;color:#202327;letter-spacing:0.7px;-webkit-text-stroke:0.35px #202327;">37253701051</div>
<div class="t u" style="left:2125.5px;top:1381.7px;font-size:24px;color:#202327;letter-spacing:0.7px;-webkit-text-stroke:0.35px #202327;">SubEnabled</div>
<div class="t u" style="left:2125.5px;top:1419.4px;font-size:24px;color:#202327;letter-spacing:0.7px;-webkit-text-stroke:0.35px #202327;">Supplier WH</div>
<div class="t u" style="left:2412px;top:1401.1px;font-size:24px;color:#202327;letter-spacing:0.7px;-webkit-text-stroke:0.35px #202327;">0s</div>
<div class="t" style="left:2592px;top:1401.1px;font-size:24px;font-weight:400;color:#202327;-webkit-text-stroke:0.35px #202327;letter-spacing:0.6px;">sub</div>
<div class="a" style="left:64px;top:1497px;width:32px;height:32px;background:#fff;border:3px solid #9a9a9a;border-radius:5px;"></div>
<div class="t" style="left:144.5px;top:1499.1px;font-size:24px;font-weight:400;color:#202327;-webkit-text-stroke:0.35px #202327;letter-spacing:0.55px;">1402274</div>
<div class="t" style="left:324.3px;top:1479.4px;font-size:24px;font-weight:400;color:#202327;-webkit-text-stroke:0.35px #202327;letter-spacing:0.3px;">18:50:08</div>
<div class="t" style="left:324.3px;top:1516.9px;font-size:24px;font-weight:400;color:#202327;-webkit-text-stroke:0.35px #202327;letter-spacing:0.8px;">29/10/25</div>
<div class="t" style="left:505px;top:1499.1px;font-size:24px;font-weight:400;color:#202327;-webkit-text-stroke:0.35px #202327;letter-spacing:0.68px;">Estonia(248)/Telia(01)</div>
<svg class="a" style="left:932.2px;top:1488.7px;width:46.299999999999955px;height:46.299999999999955px;color:#b3261e;" viewBox="0 0 24 24" fill="none" stroke="#b3261e" stroke-width="2.05" stroke-linecap="round" stroke-linejoin="round"><path d="M3 12a9 9 0 1 0 18 0a9 9 0 1 0 -18 0"/><circle cx="8.9" cy="10.1" r="1.25" fill="currentColor" stroke="none"/><circle cx="15.1" cy="10.1" r="1.25" fill="currentColor" stroke="none"/><path d="M8.9 15.9a4.6 4.6 0 0 1 6.2 0"/></svg>
<svg class="a" style="left:991.7px;top:1488px;width:46.899999999999864px;height:46.90000000000009px;color:#b3261e;" viewBox="0 0 24 24" fill="none" stroke="#b3261e" stroke-width="2.05" stroke-linecap="round" stroke-linejoin="round"><path d="M3 12a9 9 0 1 0 18 0a9 9 0 1 0 -18 0"/><path d="M9 9l6 6m0 -6l-6 6"/></svg>
<svg class="a" style="left:975px;top:1496px;width:20px;height:34px" viewBox="0 0 20 34"><path d="M5.9 30.4L13.2 2.2" stroke="#202327" stroke-width="3.2"/></svg>
<div class="a" style="left:936px;top:1546px;width:100px;height:2px;background:repeating-linear-gradient(90deg,#a0a0a0 0 6px,transparent 6px 10.45px);"></div>
<div class="t u" style="left:1116.5px;top:1499.1px;font-size:24px;color:#202327;letter-spacing:0.7px;-webkit-text-stroke:0.35px #202327;">subDisabled</div>
<div class="t u" style="left:1404.5px;top:1499.1px;font-size:24px;color:#202327;letter-spacing:0.7px;-webkit-text-stroke:0.35px #202327;">Verification code:641260</div>
<div class="t u" style="left:1836.5px;top:1499.1px;font-size:24px;color:#202327;letter-spacing:0.7px;-webkit-text-stroke:0.35px #202327;">37251989657</div>
<div class="t u" style="left:2125.5px;top:1479.7px;font-size:24px;color:#202327;letter-spacing:0.7px;-webkit-text-stroke:0.35px #202327;">SubDisabled</div>
<div class="t u" style="left:2125.5px;top:1517.4px;font-size:24px;color:#202327;letter-spacing:0.7px;-webkit-text-stroke:0.35px #202327;">Supplier Pro</div>
<div class="t u" style="left:2412px;top:1499.1px;font-size:24px;color:#202327;letter-spacing:0.7px;-webkit-text-stroke:0.35px #202327;">0s</div>
<div class="t" style="left:2592px;top:1499.1px;font-size:24px;font-weight:400;color:#202327;-webkit-text-stroke:0.35px #202327;letter-spacing:0.6px;">sub</div>
<div class="a" style="left:64px;top:1593px;width:32px;height:32px;background:#fff;border:3px solid #9a9a9a;border-radius:5px;"></div>
<div class="t" style="left:144.5px;top:1595.1px;font-size:24px;font-weight:400;color:#202327;-webkit-text-stroke:0.35px #202327;letter-spacing:0.55px;">1402273</div>
<div class="t" style="left:324.3px;top:1575.4px;font-size:24px;font-weight:400;color:#202327;-webkit-text-stroke:0.35px #202327;letter-spacing:0.3px;">18:48:23</div>
<div class="t" style="left:324.3px;top:1612.9px;font-size:24px;font-weight:400;color:#202327;-webkit-text-stroke:0.35px #202327;letter-spacing:0.8px;">29/10/25</div>
<div class="t" style="left:505px;top:1595.1px;font-size:24px;font-weight:400;color:#202327;-webkit-text-stroke:0.35px #202327;letter-spacing:0.68px;">Estonia(248)/Telia(01)</div>
<svg class="a" style="left:932.2px;top:1584.7px;width:46.299999999999955px;height:46.299999999999955px;color:#b3261e;" viewBox="0 0 24 24" fill="none" stroke="#b3261e" stroke-width="2.05" stroke-linecap="round" stroke-linejoin="round"><path d="M3 12a9 9 0 1 0 18 0a9 9 0 1 0 -18 0"/><circle cx="8.9" cy="10.1" r="1.25" fill="currentColor" stroke="none"/><circle cx="15.1" cy="10.1" r="1.25" fill="currentColor" stroke="none"/><path d="M8.9 15.9a4.6 4.6 0 0 1 6.2 0"/></svg>
<svg class="a" style="left:991.7px;top:1584px;width:46.899999999999864px;height:46.90000000000009px;color:#b3261e;" viewBox="0 0 24 24" fill="none" stroke="#b3261e" stroke-width="2.05" stroke-linecap="round" stroke-linejoin="round"><path d="M3 12a9 9 0 1 0 18 0a9 9 0 1 0 -18 0"/><path d="M9 9l6 6m0 -6l-6 6"/></svg>
<svg class="a" style="left:975px;top:1592px;width:20px;height:34px" viewBox="0 0 20 34"><path d="M5.9 30.4L13.2 2.2" stroke="#202327" stroke-width="3.2"/></svg>
<div class="a" style="left:936px;top:1642px;width:100px;height:2px;background:repeating-linear-gradient(90deg,#a0a0a0 0 6px,transparent 6px 10.45px);"></div>
<div class="t u" style="left:1116.5px;top:1595.1px;font-size:24px;color:#202327;letter-spacing:0.7px;-webkit-text-stroke:0.35px #202327;">MainAcc</div>
<div class="t u" style="left:1404.5px;top:1595.1px;font-size:24px;color:#202327;letter-spacing:0.7px;-webkit-text-stroke:0.35px #202327;">Your verification code...</div>
<div class="t u" style="left:1836.5px;top:1595.1px;font-size:24px;color:#202327;letter-spacing:0.7px;-webkit-text-stroke:0.35px #202327;">37253704001</div>
<div class="t u" style="left:2125.5px;top:1595.1px;font-size:24px;color:#202327;letter-spacing:0.7px;-webkit-text-stroke:0.35px #202327;">Main Supplier SS7</div>
<div class="t u" style="left:2412px;top:1595.1px;font-size:24px;color:#202327;letter-spacing:0.7px;-webkit-text-stroke:0.35px #202327;">0s</div>
<div class="t" style="left:2592px;top:1595.1px;font-size:24px;font-weight:400;color:#202327;-webkit-text-stroke:0.35px #202327;letter-spacing:0.6px;">main</div>
<div class="a" style="left:64px;top:1689px;width:32px;height:32px;background:#fff;border:3px solid #9a9a9a;border-radius:5px;"></div>
<div class="t" style="left:144.5px;top:1691.1px;font-size:24px;font-weight:400;color:#202327;-webkit-text-stroke:0.35px #202327;letter-spacing:0.55px;">1402272</div>
<div class="t" style="left:324.3px;top:1671.4px;font-size:24px;font-weight:400;color:#202327;-webkit-text-stroke:0.35px #202327;letter-spacing:0.3px;">18:46:38</div>
<div class="t" style="left:324.3px;top:1708.9px;font-size:24px;font-weight:400;color:#202327;-webkit-text-stroke:0.35px #202327;letter-spacing:0.8px;">29/10/25</div>
<div class="t" style="left:505px;top:1691.1px;font-size:24px;font-weight:400;color:#202327;-webkit-text-stroke:0.35px #202327;letter-spacing:0.68px;">Estonia(248)/Telia(01)</div>
<svg class="a" style="left:932.2px;top:1680.7px;width:46.299999999999955px;height:46.299999999999955px;color:#b3261e;" viewBox="0 0 24 24" fill="none" stroke="#b3261e" stroke-width="2.05" stroke-linecap="round" stroke-linejoin="round"><path d="M3 12a9 9 0 1 0 18 0a9 9 0 1 0 -18 0"/><circle cx="8.9" cy="10.1" r="1.25" fill="currentColor" stroke="none"/><circle cx="15.1" cy="10.1" r="1.25" fill="currentColor" stroke="none"/><path d="M8.9 15.9a4.6 4.6 0 0 1 6.2 0"/></svg>
<svg class="a" style="left:991.7px;top:1680px;width:46.899999999999864px;height:46.90000000000009px;color:#b3261e;" viewBox="0 0 24 24" fill="none" stroke="#b3261e" stroke-width="2.05" stroke-linecap="round" stroke-linejoin="round"><path d="M3 12a9 9 0 1 0 18 0a9 9 0 1 0 -18 0"/><path d="M9 9l6 6m0 -6l-6 6"/></svg>
<svg class="a" style="left:975px;top:1688px;width:20px;height:34px" viewBox="0 0 20 34"><path d="M5.9 30.4L13.2 2.2" stroke="#202327" stroke-width="3.2"/></svg>
<div class="a" style="left:936px;top:1738px;width:100px;height:2px;background:repeating-linear-gradient(90deg,#a0a0a0 0 6px,transparent 6px 10.45px);"></div>
<div class="t u" style="left:1116.5px;top:1691.1px;font-size:24px;color:#202327;letter-spacing:0.7px;-webkit-text-stroke:0.35px #202327;">DeputyAcc</div>
<div class="t u" style="left:1404.5px;top:1691.1px;font-size:24px;color:#202327;letter-spacing:0.7px;-webkit-text-stroke:0.35px #202327;">This is your verification...</div>
<div class="t u" style="left:1836.5px;top:1691.1px;font-size:24px;color:#202327;letter-spacing:0.7px;-webkit-text-stroke:0.35px #202327;">37253518948</div>
<div class="t u" style="left:2125.5px;top:1691.1px;font-size:24px;color:#202327;letter-spacing:0.7px;-webkit-text-stroke:0.35px #202327;">Deputy Supplier HQ</div>
<div class="t u" style="left:2412px;top:1691.1px;font-size:24px;color:#202327;letter-spacing:0.7px;-webkit-text-stroke:0.35px #202327;">0s</div>
<div class="t" style="left:2592px;top:1691.1px;font-size:24px;font-weight:400;color:#202327;-webkit-text-stroke:0.35px #202327;letter-spacing:0.6px;">deputy</div>
<div class="a" style="left:64px;top:1785px;width:32px;height:32px;background:#fff;border:3px solid #9a9a9a;border-radius:5px;"></div>
<div class="t" style="left:144.5px;top:1787.1px;font-size:24px;font-weight:400;color:#202327;-webkit-text-stroke:0.35px #202327;letter-spacing:0.55px;">1402271</div>
<div class="t" style="left:324.3px;top:1767.4px;font-size:24px;font-weight:400;color:#202327;-webkit-text-stroke:0.35px #202327;letter-spacing:0.3px;">18:39:10</div>
<div class="t" style="left:324.3px;top:1804.9px;font-size:24px;font-weight:400;color:#202327;-webkit-text-stroke:0.35px #202327;letter-spacing:0.8px;">29/10/25</div>
<div class="t" style="left:505px;top:1787.1px;font-size:24px;font-weight:400;color:#202327;-webkit-text-stroke:0.35px #202327;letter-spacing:0.68px;">Estonia(248)/Telia(01)</div>
<svg class="a" style="left:932.2px;top:1776.7px;width:46.299999999999955px;height:46.299999999999955px;color:#b3261e;" viewBox="0 0 24 24" fill="none" stroke="#b3261e" stroke-width="2.05" stroke-linecap="round" stroke-linejoin="round"><path d="M3 12a9 9 0 1 0 18 0a9 9 0 1 0 -18 0"/><circle cx="8.9" cy="10.1" r="1.25" fill="currentColor" stroke="none"/><circle cx="15.1" cy="10.1" r="1.25" fill="currentColor" stroke="none"/><path d="M8.9 15.9a4.6 4.6 0 0 1 6.2 0"/></svg>
<svg class="a" style="left:991.7px;top:1776px;width:46.899999999999864px;height:46.90000000000009px;color:#b3261e;" viewBox="0 0 24 24" fill="none" stroke="#b3261e" stroke-width="2.05" stroke-linecap="round" stroke-linejoin="round"><path d="M3 12a9 9 0 1 0 18 0a9 9 0 1 0 -18 0"/><path d="M9 9l6 6m0 -6l-6 6"/></svg>
<svg class="a" style="left:975px;top:1784px;width:20px;height:34px" viewBox="0 0 20 34"><path d="M5.9 30.4L13.2 2.2" stroke="#202327" stroke-width="3.2"/></svg>
<div class="a" style="left:936px;top:1834px;width:100px;height:2px;background:repeating-linear-gradient(90deg,#a0a0a0 0 6px,transparent 6px 10.45px);"></div>
<div class="t u" style="left:1116.5px;top:1787.1px;font-size:24px;color:#202327;letter-spacing:0.7px;-webkit-text-stroke:0.35px #202327;">DLR</div>
<div class="t u" style="left:1404.5px;top:1787.1px;font-size:24px;color:#202327;letter-spacing:0.7px;-webkit-text-stroke:0.35px #202327;">DLR test</div>
<div class="t u" style="left:1836.5px;top:1787.1px;font-size:24px;color:#202327;letter-spacing:0.7px;-webkit-text-stroke:0.35px #202327;">37253518000</div>
<div class="t u" style="left:2125.5px;top:1767.7px;font-size:24px;color:#202327;letter-spacing:0.7px;-webkit-text-stroke:0.35px #202327;">DLR and RS</div>
<div class="t u" style="left:2125.5px;top:1805.4px;font-size:24px;color:#202327;letter-spacing:0.7px;-webkit-text-stroke:0.35px #202327;">Supplier</div>
<div class="t u" style="left:2412px;top:1787.1px;font-size:24px;color:#202327;letter-spacing:0.7px;-webkit-text-stroke:0.35px #202327;">0s</div>
<div class="t" style="left:2592px;top:1787.1px;font-size:24px;font-weight:400;color:#202327;-webkit-text-stroke:0.35px #202327;letter-spacing:0.6px;">main</div>
<svg class="a" style="left:2776px;top:1400px;width:30px;height:30px" viewBox="0 0 30 30" fill="none" stroke="#202327" stroke-width="1.9" stroke-linecap="round" stroke-linejoin="round"><path d="M6.6 4.2H5.6a2.6 2.6 0 0 0 -2.6 2.6V19.4a2.6 2.6 0 0 0 2.6 2.6H8.6"/><path d="M14.2 4.2H15.2a2.6 2.6 0 0 1 2.6 2.6V10.2"/><rect x="6.6" y="1.6" width="7.6" height="4.8" rx="2.2"/><path d="M5.8 10.6H9.8"/><path d="M5.8 15.1H7.8"/></svg>
<svg class="a" style="left:2778px;top:1403.1px;width:30px;height:30px" viewBox="0 0 30 30" fill="none" stroke="#202327" stroke-width="1.3" stroke-linejoin="round"><path d="M20.70 15.22L20.35 16.97L18.81 16.76L18.08 17.85L18.87 19.19L17.39 20.18L16.45 18.94L15.16 19.20L14.78 20.70L13.03 20.35L13.24 18.81L12.15 18.08L10.81 18.87L9.82 17.39L11.06 16.45L10.80 15.16L9.30 14.78L9.65 13.03L11.19 13.24L11.92 12.15L11.13 10.81L12.61 9.82L13.55 11.06L14.84 10.80L15.22 9.30L16.97 9.65L16.76 11.19L17.85 11.92L19.19 11.13L20.18 12.61L18.94 13.55L19.20 14.84Z"/><circle cx="15" cy="15" r="1.9"/></svg>
<svg class="a" style="left:2838px;top:1398.5px;width:30px;height:28.0px;color:#202327;" viewBox="0 0 24 24" fill="none" stroke="#202327" stroke-width="2" stroke-linecap="round" stroke-linejoin="round"><path d="M12 20A8 8 0 1 1 20 12"/><path d="M17.2 10.2L20 13L22.8 10.2"/></svg>
<svg class="a" style="left:2905px;top:1400px;width:18px;height:28px" viewBox="0 0 18 28"><circle cx="9" cy="4" r="2.4" fill="#202327"/><circle cx="9" cy="13.5" r="2.4" fill="#202327"/><circle cx="9" cy="23" r="2.4" fill="#202327"/></svg>
<svg class="a" style="left:2776px;top:1498px;width:30px;height:30px" viewBox="0 0 30 30" fill="none" stroke="#202327" stroke-width="1.9" stroke-linecap="round" stroke-linejoin="round"><path d="M6.6 4.2H5.6a2.6 2.6 0 0 0 -2.6 2.6V19.4a2.6 2.6 0 0 0 2.6 2.6H8.6"/><path d="M14.2 4.2H15.2a2.6 2.6 0 0 1 2.6 2.6V10.2"/><rect x="6.6" y="1.6" width="7.6" height="4.8" rx="2.2"/><path d="M5.8 10.6H9.8"/><path d="M5.8 15.1H7.8"/></svg>
<svg class="a" style="left:2778px;top:1501.1px;width:30px;height:30px" viewBox="0 0 30 30" fill="none" stroke="#202327" stroke-width="1.3" stroke-linejoin="round"><path d="M20.70 15.22L20.35 16.97L18.81 16.76L18.08 17.85L18.87 19.19L17.39 20.18L16.45 18.94L15.16 19.20L14.78 20.70L13.03 20.35L13.24 18.81L12.15 18.08L10.81 18.87L9.82 17.39L11.06 16.45L10.80 15.16L9.30 14.78L9.65 13.03L11.19 13.24L11.92 12.15L11.13 10.81L12.61 9.82L13.55 11.06L14.84 10.80L15.22 9.30L16.97 9.65L16.76 11.19L17.85 11.92L19.19 11.13L20.18 12.61L18.94 13.55L19.20 14.84Z"/><circle cx="15" cy="15" r="1.9"/></svg>
<svg class="a" style="left:2838px;top:1496.5px;width:30px;height:28.0px;color:#202327;" viewBox="0 0 24 24" fill="none" stroke="#202327" stroke-width="2" stroke-linecap="round" stroke-linejoin="round"><path d="M12 20A8 8 0 1 1 20 12"/><path d="M17.2 10.2L20 13L22.8 10.2"/></svg>
<svg class="a" style="left:2905px;top:1498px;width:18px;height:28px" viewBox="0 0 18 28"><circle cx="9" cy="4" r="2.4" fill="#202327"/><circle cx="9" cy="13.5" r="2.4" fill="#202327"/><circle cx="9" cy="23" r="2.4" fill="#202327"/></svg>
<svg class="a" style="left:2776px;top:1594px;width:30px;height:30px" viewBox="0 0 30 30" fill="none" stroke="#202327" stroke-width="1.9" stroke-linecap="round" stroke-linejoin="round"><path d="M6.6 4.2H5.6a2.6 2.6 0 0 0 -2.6 2.6V19.4a2.6 2.6 0 0 0 2.6 2.6H8.6"/><path d="M14.2 4.2H15.2a2.6 2.6 0 0 1 2.6 2.6V10.2"/><rect x="6.6" y="1.6" width="7.6" height="4.8" rx="2.2"/><path d="M5.8 10.6H9.8"/><path d="M5.8 15.1H7.8"/></svg>
<svg class="a" style="left:2778px;top:1597.1px;width:30px;height:30px" viewBox="0 0 30 30" fill="none" stroke="#202327" stroke-width="1.3" stroke-linejoin="round"><path d="M20.70 15.22L20.35 16.97L18.81 16.76L18.08 17.85L18.87 19.19L17.39 20.18L16.45 18.94L15.16 19.20L14.78 20.70L13.03 20.35L13.24 18.81L12.15 18.08L10.81 18.87L9.82 17.39L11.06 16.45L10.80 15.16L9.30 14.78L9.65 13.03L11.19 13.24L11.92 12.15L11.13 10.81L12.61 9.82L13.55 11.06L14.84 10.80L15.22 9.30L16.97 9.65L16.76 11.19L17.85 11.92L19.19 11.13L20.18 12.61L18.94 13.55L19.20 14.84Z"/><circle cx="15" cy="15" r="1.9"/></svg>
<svg class="a" style="left:2838px;top:1592.5px;width:30px;height:28.0px;color:#202327;" viewBox="0 0 24 24" fill="none" stroke="#202327" stroke-width="2" stroke-linecap="round" stroke-linejoin="round"><path d="M12 20A8 8 0 1 1 20 12"/><path d="M17.2 10.2L20 13L22.8 10.2"/></svg>
<svg class="a" style="left:2905px;top:1594px;width:18px;height:28px" viewBox="0 0 18 28"><circle cx="9" cy="4" r="2.4" fill="#202327"/><circle cx="9" cy="13.5" r="2.4" fill="#202327"/><circle cx="9" cy="23" r="2.4" fill="#202327"/></svg>
<svg class="a" style="left:2776px;top:1690px;width:30px;height:30px" viewBox="0 0 30 30" fill="none" stroke="#202327" stroke-width="1.9" stroke-linecap="round" stroke-linejoin="round"><path d="M6.6 4.2H5.6a2.6 2.6 0 0 0 -2.6 2.6V19.4a2.6 2.6 0 0 0 2.6 2.6H8.6"/><path d="M14.2 4.2H15.2a2.6 2.6 0 0 1 2.6 2.6V10.2"/><rect x="6.6" y="1.6" width="7.6" height="4.8" rx="2.2"/><path d="M5.8 10.6H9.8"/><path d="M5.8 15.1H7.8"/></svg>
<svg class="a" style="left:2778px;top:1693.1px;width:30px;height:30px" viewBox="0 0 30 30" fill="none" stroke="#202327" stroke-width="1.3" stroke-linejoin="round"><path d="M20.70 15.22L20.35 16.97L18.81 16.76L18.08 17.85L18.87 19.19L17.39 20.18L16.45 18.94L15.16 19.20L14.78 20.70L13.03 20.35L13.24 18.81L12.15 18.08L10.81 18.87L9.82 17.39L11.06 16.45L10.80 15.16L9.30 14.78L9.65 13.03L11.19 13.24L11.92 12.15L11.13 10.81L12.61 9.82L13.55 11.06L14.84 10.80L15.22 9.30L16.97 9.65L16.76 11.19L17.85 11.92L19.19 11.13L20.18 12.61L18.94 13.55L19.20 14.84Z"/><circle cx="15" cy="15" r="1.9"/></svg>
<svg class="a" style="left:2838px;top:1688.5px;width:30px;height:28.0px;color:#202327;" viewBox="0 0 24 24" fill="none" stroke="#202327" stroke-width="2" stroke-linecap="round" stroke-linejoin="round"><path d="M12 20A8 8 0 1 1 20 12"/><path d="M17.2 10.2L20 13L22.8 10.2"/></svg>
<svg class="a" style="left:2905px;top:1690px;width:18px;height:28px" viewBox="0 0 18 28"><circle cx="9" cy="4" r="2.4" fill="#202327"/><circle cx="9" cy="13.5" r="2.4" fill="#202327"/><circle cx="9" cy="23" r="2.4" fill="#202327"/></svg>
<svg class="a" style="left:2776px;top:1786px;width:30px;height:30px" viewBox="0 0 30 30" fill="none" stroke="#202327" stroke-width="1.9" stroke-linecap="round" stroke-linejoin="round"><path d="M6.6 4.2H5.6a2.6 2.6 0 0 0 -2.6 2.6V19.4a2.6 2.6 0 0 0 2.6 2.6H8.6"/><path d="M14.2 4.2H15.2a2.6 2.6 0 0 1 2.6 2.6V10.2"/><rect x="6.6" y="1.6" width="7.6" height="4.8" rx="2.2"/><path d="M5.8 10.6H9.8"/><path d="M5.8 15.1H7.8"/></svg>
<svg class="a" style="left:2778px;top:1789.1px;width:30px;height:30px" viewBox="0 0 30 30" fill="none" stroke="#202327" stroke-width="1.3" stroke-linejoin="round"><path d="M20.70 15.22L20.35 16.97L18.81 16.76L18.08 17.85L18.87 19.19L17.39 20.18L16.45 18.94L15.16 19.20L14.78 20.70L13.03 20.35L13.24 18.81L12.15 18.08L10.81 18.87L9.82 17.39L11.06 16.45L10.80 15.16L9.30 14.78L9.65 13.03L11.19 13.24L11.92 12.15L11.13 10.81L12.61 9.82L13.55 11.06L14.84 10.80L15.22 9.30L16.97 9.65L16.76 11.19L17.85 11.92L19.19 11.13L20.18 12.61L18.94 13.55L19.20 14.84Z"/><circle cx="15" cy="15" r="1.9"/></svg>
<svg class="a" style="left:2838px;top:1784.5px;width:30px;height:28.0px;color:#202327;" viewBox="0 0 24 24" fill="none" stroke="#202327" stroke-width="2" stroke-linecap="round" stroke-linejoin="round"><path d="M12 20A8 8 0 1 1 20 12"/><path d="M17.2 10.2L20 13L22.8 10.2"/></svg>
<svg class="a" style="left:2905px;top:1786px;width:18px;height:28px" viewBox="0 0 18 28"><circle cx="9" cy="4" r="2.4" fill="#202327"/><circle cx="9" cy="13.5" r="2.4" fill="#202327"/><circle cx="9" cy="23" r="2.4" fill="#202327"/></svg>
<div class="a" style="left:0px;top:1696px;width:3004px;height:80px;background:linear-gradient(to bottom, rgba(0,0,0,0) 0%, rgba(0,0,0,0.015) 35%, rgba(0,0,0,0.045) 65%, rgba(0,0,0,0.08) 85%, rgba(0,0,0,0.115) 100%);-webkit-mask-image:linear-gradient(to right, rgba(0,0,0,0.35) 0px, #000 220px, #000 2250px, rgba(0,0,0,0.3) 2480px, rgba(0,0,0,0) 2650px);"></div>
<div class="a" style="left:2200px;top:618px;width:787px;height:1138px;border:10px solid #f0973a;border-radius:24px;"></div>
<div class="a" style="left:2254px;top:671px;width:700px;height:929px;background:#44484c;border-radius:32px;box-shadow:0 6px 28px rgba(0,0,0,0.22);"></div>
<svg class="a" style="left:2296px;top:724px;width:32px;height:32px;color:#ffffff;" viewBox="0 0 24 24" fill="none" stroke="#ffffff" stroke-width="2" stroke-linecap="round" stroke-linejoin="round"><path d="M3 12a9 9 0 1 0 18 0a9 9 0 1 0 -18 0"/><path d="M12 17l0 .01"/><path d="M12 13.5a1.5 1.5 0 0 1 1 -1.5a2.6 2.6 0 1 0 -3 -4"/></svg>
<div class="t" style="left:2347px;top:724.5px;font-size:28px;font-weight:700;color:#ffffff;">Help</div>
<div class="t" style="left:2298px;top:779.9px;font-size:24px;font-weight:400;color:#ffffff;-webkit-text-stroke:0.3px #ffffff;letter-spacing:0.75px;">Click here to access information.</div>
<svg class="a" style="left:2298px;top:879px;width:25px;height:29px" viewBox="0 0 25 29"><path d="M5 0H24.7V21.5Q23.5 23 24.7 24.5V28.8H5Q0 28.8 0 23.8V5Q0 0 5 0Z" fill="#fff"/><rect x="7.2" y="7.5" width="11.8" height="1.7" fill="#44484c"/><rect x="7.2" y="11" width="11.8" height="1.7" fill="#44484c"/><rect x="3.8" y="21.4" width="17" height="3.4" rx="1.7" fill="#44484c"/></svg>
<div class="t" style="left:2343px;top:878.7px;font-size:28px;font-weight:700;color:#ffffff;">Documentation</div>
<div class="t" style="left:2298px;top:934.4px;font-size:24px;font-weight:400;color:#ffffff;-webkit-text-stroke:0.3px #ffffff;letter-spacing:0.75px;">Click here to access our Customer Documentation and</div>
<div class="t" style="left:2298px;top:965.4px;font-size:24px;font-weight:400;color:#ffffff;-webkit-text-stroke:0.3px #ffffff;letter-spacing:0.75px;">learn more about our Testing Platform.</div>
<svg class="a" style="left:2297px;top:1066px;width:30px;height:27px" viewBox="0 0 30 27"><circle cx="6.5" cy="6.5" r="5.5" fill="#fff"/><circle cx="6.5" cy="6.5" r="2.4" fill="#44484c"/><circle cx="15.4" cy="6.3" r="5.6" fill="#fff"/><rect x="2.5" y="11.9" width="16.8" height="13.5" rx="3" fill="none" stroke="#fff" stroke-width="3"/><path d="M20.5 15.5L27 11.5V24.5L20.5 20.5" fill="none" stroke="#fff" stroke-width="3" stroke-linejoin="round"/></svg>
<div class="t" style="left:2347px;top:1063.7px;font-size:28px;font-weight:700;color:#ffffff;">Watch our demo</div>
<div class="t" style="left:2298px;top:1119.4px;font-size:24px;font-weight:400;color:#ffffff;-webkit-text-stroke:0.3px #ffffff;letter-spacing:0.75px;">Click here to watch our video tutorials for the SMS</div>
<div class="t" style="left:2298px;top:1150.4px;font-size:24px;font-weight:400;color:#ffffff;-webkit-text-stroke:0.3px #ffffff;letter-spacing:0.75px;">Testing Platform.</div>
<div class="a" style="left:2285px;top:1228px;width:638px;height:340px;background:#a1a2a4;border-radius:22px;"></div>
<div class="a" style="left:2298px;top:1248px;width:612px;height:304px;background:#ffffff;border-radius:16px;"></div>
<svg class="a" style="left:2330px;top:1280px;width:130px;height:120px" viewBox="0 0 130 120">
<path d="M68 15.2H94a2 2 0 0 1 2 2V39.6H80L70 48.5L69.5 39.6H68a2 2 0 0 1 -2 -2V17.2a2 2 0 0 1 2 -2Z" fill="#6e96bb"/>
<path d="M82.5 28.3H112L118 37.5V56.5a1.5 1.5 0 0 1 -1.5 1.5H111.3L112.6 69L99.8 58H82.5a1.5 1.5 0 0 1 -1.5 -1.5V29.8a1.5 1.5 0 0 1 1.5 -1.5Z" fill="#2f4c75"/>
<path d="M25 63.5V56a18.6 18.6 0 0 1 37.2 0V63.5" fill="none" stroke="#6e96bb" stroke-width="4.2"/>
<path d="M28.6 62V56a15 15 0 0 1 30 0V62" fill="none" stroke="#e8edf1" stroke-width="3.2"/>
<ellipse cx="21.6" cy="54.6" rx="3.2" ry="3.8" fill="#2f4c75"/>
<ellipse cx="65.8" cy="54.6" rx="3.2" ry="3.8" fill="#2f4c75"/>
<path d="M30.3 56a13.2 13.2 0 0 1 26.3 0V64a13.15 10 0 0 1 -26.3 0Z" fill="#d4a46a"/>
<path d="M30.3 56a13.2 12.5 0 0 1 26.3 -3.5C52 47 47 52 41 54.5C36 56.5 32 56 30.3 55.5Z" fill="#2f4c75"/>
<path d="M38 72H49V78a5.5 5 0 0 1 -11 0Z" fill="#b07236"/>
<path d="M44.5 65.5L61 61.5" stroke="#6e96bb" stroke-width="3" stroke-linecap="round"/>
<path d="M24 76.8H59A10 10 0 0 1 67 80.5L62 108.7H26L14 97A10 10 0 0 1 13.5 92Q16 78 24 76.8Z" fill="#2f4c75"/>
<path d="M27.5 91.5L24.7 94V100.3H40.5V108.7" fill="none" stroke="#6e96bb" stroke-width="2.6" stroke-linecap="round" stroke-linejoin="round"/>
<rect x="34" y="103.5" width="5.2" height="5.2" fill="#d4a46a"/>
<path d="M62.5 83.2H103L96 108.7H55Z" fill="#8d8d8c"/>
<path d="M79 94.5L81.5 96L79 97.5Z" fill="#aacbec"/>
<path d="M25 109H103L99 112.5H29Z" fill="#aacbec"/>
</svg>
<div class="t" style="left:2485px;top:1286.5px;font-size:32px;font-weight:400;color:#44484c;-webkit-text-stroke:0.6px #44484c;letter-spacing:1.05px;">Chat with TelQ</div>
<div class="t" style="left:2334.5px;top:1435.9px;font-size:24px;font-weight:400;color:#44484c;-webkit-text-stroke:0.45px #44484c;letter-spacing:0.85px;">Contact our team for any technical,</div>
<div class="t" style="left:2334.5px;top:1466.9px;font-size:24px;font-weight:400;color:#44484c;-webkit-text-stroke:0.45px #44484c;letter-spacing:0.85px;">commercial and other queries.</div>
<div class="a" style="left:2850px;top:1620px;width:112px;height:112px;border-radius:50%;background:rgba(118,92,242,0.55);"></div>
<div class="a" style="left:2858px;top:1628px;width:96px;height:96px;border-radius:50%;background:#765cf2;"></div>
<svg class="a" style="left:2878.8px;top:1646.6px;width:54.399999999999636px;height:54.40000000000009px;color:#ffffff;" viewBox="0 0 24 24" fill="none" stroke="#ffffff" stroke-width="1.6" stroke-linecap="round" stroke-linejoin="round"><path d="M18 6l-12 12"/><path d="M6 6l12 12"/></svg>
</body></html>
